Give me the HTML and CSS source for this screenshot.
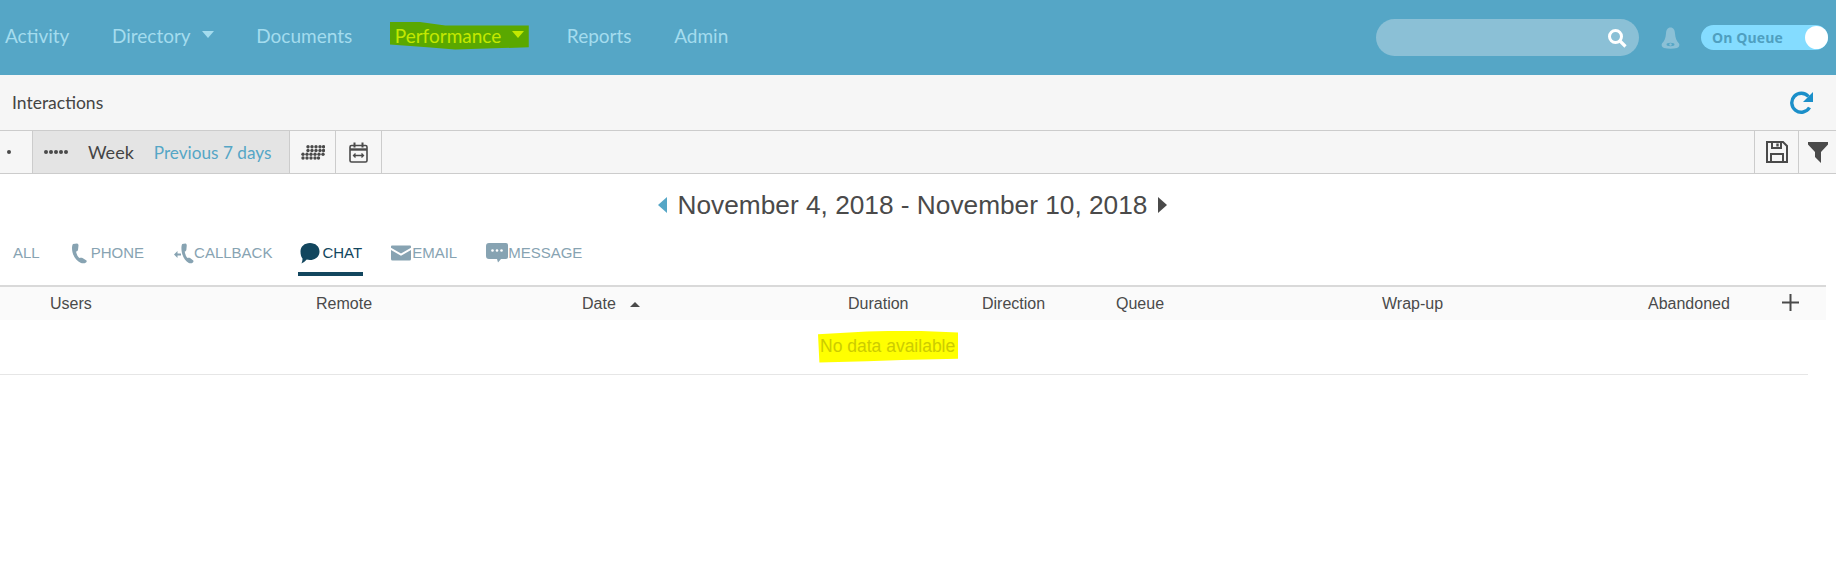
FILE: index.html
```html
<!DOCTYPE html>
<html lang="en">
<head>
<meta charset="utf-8">
<title>Interactions</title>
<link rel="stylesheet" href="styles.css">
</head>
<body>
<header class="nav">
  <nav class="nav-links">
    <a class="nav-item">Activity</a>
    <a class="nav-item">Directory <span class="caret"></span></a>
    <a class="nav-item">Documents</a>
    <a class="nav-item nav-marked">Performance <span class="caret"></span></a>
    <a class="nav-item">Reports</a>
    <a class="nav-item">Admin</a>
  </nav>
  <div class="nav-right">
    <div class="search">
      <svg width="20" height="20" viewBox="0 0 20 20"><circle cx="8.500" cy="8.500" r="6" fill="none" stroke="#fff" stroke-width="3"/><path d="M13 13l5.500 5.500" stroke="#fff" stroke-width="3.200"/></svg>
    </div>
    <svg class="bell" width="19" height="22" viewBox="0 0 19 22"><path d="M9.500 0.500C12.500 0.500 13.800 3 14 6.500C14.300 11 15.500 14 18 16.500C19 18 18 20.500 16 21C12 22 7 22 3 21C1 20.500 0 18 1 16.500C3.500 14 4.700 11 5 6.500C5.200 3 6.500 0.500 9.500 0.500Z" fill="#8bc0d6"/><ellipse cx="9.500" cy="17.500" rx="4" ry="1.700" fill="#55a6c6"/><circle cx="9.500" cy="17.500" r="1.200" fill="#8bc0d6"/></svg>
    <div class="toggle"><span class="toggle-label">On Queue</span><span class="knob"></span></div>
  </div>
</header>

<div class="titlebar">
  <span class="page-title">Interactions</span>
  <svg width="24" height="24" viewBox="0 0 24 24"><path d="M19.500 16.500A9.500 9.500 0 1 1 18.500 5.500" fill="none" stroke="#1b8fc9" stroke-width="3.400"/><path d="M23 1v10h-10z" fill="#1b8fc9"/></svg>
</div>

<div class="toolbar">
  <div class="cell cell-dot"><span class="dots"><i></i></span></div>
  <div class="cell cell-range">
    <span class="dots"><i></i><i></i><i></i><i></i><i></i></span>
    <span class="range-name">Week</span>
    <span class="range-value">Previous 7 days</span>
  </div>
  <div class="cell cell-icon">
    <svg width="24" height="15" viewBox="0 0 24 15" fill="#4a4a4a"><circle cx="7" cy="1.800" r="1.700"/><circle cx="11" cy="1.800" r="1.700"/><circle cx="15" cy="1.800" r="1.700"/><circle cx="19" cy="1.800" r="1.700"/><circle cx="22.500" cy="1.800" r="1.700"/><circle cx="7" cy="5.500" r="1.700"/><circle cx="11" cy="5.500" r="1.700"/><circle cx="15" cy="5.500" r="1.700"/><circle cx="19" cy="5.500" r="1.700"/><circle cx="22.500" cy="5.500" r="1.700"/><circle cx="2" cy="9.200" r="1.700"/><circle cx="6" cy="9.200" r="1.700"/><circle cx="10" cy="9.200" r="1.700"/><circle cx="14" cy="9.200" r="1.700"/><circle cx="18" cy="9.200" r="1.700"/><circle cx="22" cy="9.200" r="1.700"/><circle cx="2" cy="13" r="1.700"/><circle cx="6" cy="13" r="1.700"/><circle cx="10" cy="13" r="1.700"/><circle cx="14" cy="13" r="1.700"/><circle cx="17.500" cy="13" r="1.700"/></svg>
  </div>
  <div class="cell cell-icon">
    <svg width="19" height="21" viewBox="0 0 19 21" fill="none" stroke="#4a4a4a"><rect x="1" y="3.500" width="17" height="16.500" rx="1.500" stroke-width="1.600"/><path d="M1 7.500h17" stroke-width="2.400"/><path d="M5.500 0.500v5M13.500 0.500v5" stroke-width="2"/><path d="M4.500 13.500h10M6.500 11.500l-2 2 2 2M12.500 11.500l2 2-2 2" stroke-width="1.300"/></svg>
  </div>
  <div class="toolbar-spacer"></div>
  <div class="cell cell-save">
    <svg width="22" height="22" viewBox="0 0 22 22" fill="none" stroke="#4a4a4a" stroke-width="2"><path d="M1 1h16l4 4v16H1z"/><path d="M6 1v6h9V1"/><path d="M11.500 2.500v3" stroke-width="2.400"/><path d="M5 21v-8h12v8"/></svg>
  </div>
  <div class="cell cell-filter">
    <svg width="20" height="21" viewBox="0 0 20 21"><path d="M0 0h20v2.500l-7 7.500v11l-6-6v-5L0 2.500z" fill="#4a4a4a"/></svg>
  </div>
</div>

<div class="daterange">
  <span class="arrow-left"></span>
  <span class="daterange-text">November 4, 2018 - November 10, 2018</span>
  <span class="arrow-right"></span>
</div>

<div class="tabs">
  <a class="tab">ALL</a>
  <a class="tab">
    <svg width="25" height="22" viewBox="0 0 25 22"><path d="M7 1L11 .5C12 .5 12.500 1.500 12.500 2.500L12 7C11.500 8 10.500 8.500 10 8.500C10.500 11 11.500 13.500 13.500 15C14.500 14.500 15.500 14.500 16.500 15L20.500 17.500C21 18.500 20.500 19 20 19.500C18.500 20.500 16.500 20.500 15 20C10 18 6 12 6 5C6 3.500 6.300 2 7 1Z" fill="#87a3b2"/></svg>
    PHONE
  </a>
  <a class="tab">
    <svg width="24" height="22" viewBox="0 0 24 22"><path d="M7 1L11 .5C12 .5 12.500 1.500 12.500 2.500L12 7C11.500 8 10.500 8.500 10 8.500C10.500 11 11.500 13.500 13.500 15C14.500 14.500 15.500 14.500 16.500 15L20.500 17.500C21 18.500 20.500 19 20 19.500C18.500 20.500 16.500 20.500 15 20C10 18 6 12 6 5C6 3.500 6.300 2 7 1Z" transform="translate(6.500 0) scale(.82 1)" fill="#87a3b2"/><path d="M11 11.500H7" stroke="#87a3b2" stroke-width="2"/><path d="M4 11.500l3.500-3.500v7z" fill="#87a3b2"/></svg>
    CALLBACK
  </a>
  <a class="tab tab-active">
    <svg width="24" height="24" viewBox="0 0 24 24"><path d="M12 1c5.500 0 9.500 3.500 9.500 8.500s-4 8.500-9.500 8.500c-1.200 0-2.200-.1-3.300-.4C7.200 19.500 5 21 3.500 21.500c.6-1.500 1-3 1-5C3 15 2.500 12 2.500 9.500 2.500 4.500 6.500 1 12 1z" fill="#12465e"/></svg>
    CHAT
  </a>
  <a class="tab">
    <svg width="23" height="22" viewBox="0 2 23 22"><path d="M3 4.500h18a1 1 0 0 1 1 1v1.200L12 12.500 2 6.700V5.500a1 1 0 0 1 1-1z" fill="#87a3b2"/><path d="M2 9l10 5.800L22 9v9a1.500 1.500 0 0 1-1.500 1.500h-17A1.500 1.500 0 0 1 2 18z" fill="#87a3b2"/></svg>
    EMAIL
  </a>
  <a class="tab">
    <svg width="25" height="24" viewBox="0 2 25 24"><path d="M6 3h17a2 2 0 0 1 2 2v12a2 2 0 0 1-2 2h-5l-3 3.500-1-3.500H6a3 3 0 0 1-3-3V6a3 3 0 0 1 3-3z" fill="#87a3b2"/><circle cx="9.500" cy="10.500" r="1.300" fill="#fff"/><circle cx="14" cy="10.500" r="1.300" fill="#fff"/><circle cx="18.500" cy="10.500" r="1.300" fill="#fff"/></svg>
    MESSAGE
  </a>
</div>

<div class="thead">
  <span>Users</span>
  <span>Remote</span>
  <span>Date <i class="sort"></i></span>
  <span>Duration</span>
  <span>Direction</span>
  <span>Queue</span>
  <span>Wrap-up</span>
  <span>Abandoned</span>
  <svg class="add" width="17" height="17" viewBox="0 0 17 17"><path d="M8.500 0v17M0 8.500h17" stroke="#4a4a4a" stroke-width="2"/></svg>
</div>
<div class="empty-row"><span class="empty-text">No data available</span></div>
</body>
</html>
```

FILE: styles.css
```css
* { box-sizing: border-box; }
html, body { margin: 0; padding: 0; background: #fff; }
body { width: 1836px; height: 564px; overflow: hidden; font-family: "Liberation Sans", Arial, sans-serif; color: #4a4a4a; }

.nav { height: 75px; background: #55a6c6; display: flex; align-items: center; justify-content: space-between; padding: 0 8px 0 5px; font-family: Lato, sans-serif; }
.nav-links { display: flex; align-items: center; gap: 42.600px; padding-bottom: 5px; }
.nav-item { position: relative; z-index: 0; display: flex; align-items: center; gap: 11px; font-size: 19px; color: #a4dcee; white-space: nowrap; }
.caret { width: 0; height: 0; border-left: 6px solid transparent; border-right: 6px solid transparent; border-top: 7px solid currentColor; margin-top: -2px; }
.nav-marked { color: #c4e800; }
.nav-marked::before { content: ""; position: absolute; z-index: -1; left: -5px; top: -2px; width: 139px; height: 28px; background: #5aa800; clip-path: polygon(0 0, 19% 0, 40% 14%, 100% 14%, 100% 92%, 47% 100%, 27% 92%, 0 82%); }
.nav-right { display: flex; align-items: center; }
.search { width: 263px; height: 37px; border-radius: 19px; background: #8bc0d6; display: flex; align-items: center; justify-content: flex-end; padding-right: 12px; margin-right: 22px; }
.bell { margin-right: 21px; }
.toggle { width: 127px; height: 25px; border-radius: 13px; background: #84dcff; display: flex; align-items: center; justify-content: space-between; padding-left: 11px; }
.toggle-label { font-family: "Open Sans", sans-serif; font-weight: 700; font-size: 14px; letter-spacing: .1px; color: #4f9fc0; }
.knob { width: 23px; height: 23px; border-radius: 50%; background: #fff; }

.titlebar { height: 55px; background: #f6f6f6; display: flex; align-items: center; justify-content: space-between; padding: 0 22px 0 12px; font-family: Lato, sans-serif; }
.page-title { font-size: 17.500px; color: #444; }

.toolbar { height: 44px; background: #f6f6f6; border-top: 1px solid #ccc; border-bottom: 1px solid #ccc; display: flex; font-family: Lato, sans-serif; }
.cell { display: flex; align-items: center; justify-content: center; }
.cell-dot { width: 33px; border-right: 1px solid #ccc; justify-content: flex-start; padding-left: 7px; }
.cell-range { width: 257px; background: #e4e4e4; border-right: 1px solid #ccc; justify-content: flex-start; padding-left: 11px; }
.cell-icon { width: 46px; border-right: 1px solid #ccc; }
.toolbar-spacer { flex: 1; }
.cell-save { width: 44px; border-left: 1px solid #ccc; }
.cell-filter { width: 38px; border-left: 1px solid #ccc; }
.dots { display: flex; gap: 1px; }
.dots i { width: 4px; height: 4px; border-radius: 50%; background: #4a4a4a; }
.range-name { font-size: 18px; color: #444; margin-left: 20px; }
.range-value { font-size: 17.200px; color: #55a6c6; margin-left: 20px; }

.daterange { height: 62px; display: flex; align-items: center; justify-content: center; gap: 11px; padding-right: 11px; }
.daterange-text { font-size: 26.250px; color: #4a4a4a; }
.arrow-left { width: 0; height: 0; border-top: 8px solid transparent; border-bottom: 8px solid transparent; border-right: 9px solid #55a6c6; }
.arrow-right { width: 0; height: 0; border-top: 8px solid transparent; border-bottom: 8px solid transparent; border-left: 9px solid #4a4a4a; }

.tabs { height: 35px; margin: 5px 0 9px; padding-left: 13px; display: flex; gap: 26px; }
.tab { display: flex; align-items: center; height: 35px; padding-bottom: 9px; font-size: 15px; color: #87a3b2; border-bottom: 4px solid transparent; white-space: nowrap; }
.tab svg { margin-top: 4px; }
.tab-active { color: #12465e; border-bottom-color: #12465e; padding-right: 1px; }

.thead { width: 1826px; height: 35px; border-top: 2px solid #d9d9d9; background: #fafafa; padding: 0 0 0 50px; display: grid; grid-template-columns: 266px 266px 266px 134px 134px 266px 266px 136px 17px; align-items: center; font-size: 16px; color: #4a4a4a; }
.add { margin: -3px 0 0 -2px; }
.sort { display: inline-block; width: 0; height: 0; margin: 0 0 2px 10px; border-left: 5px solid transparent; border-right: 5px solid transparent; border-bottom: 5px solid #4a4a4a; }
.empty-row { width: 1808px; height: 55px; border-bottom: 1px solid #e6e6e6; display: flex; align-items: center; padding: 0 0 2px 820px; }
.empty-text { position: relative; z-index: 0; font-size: 17.500px; color: #cccc00; white-space: nowrap; }
.empty-text::before { content: ""; position: absolute; z-index: -1; left: -2px; top: -5px; width: 140px; height: 32px; background: #ffff00; clip-path: polygon(0 12%, 35% 3%, 65% 0, 100% 6%, 100% 88%, 60% 92%, 35% 96%, 1% 100%); }
```
